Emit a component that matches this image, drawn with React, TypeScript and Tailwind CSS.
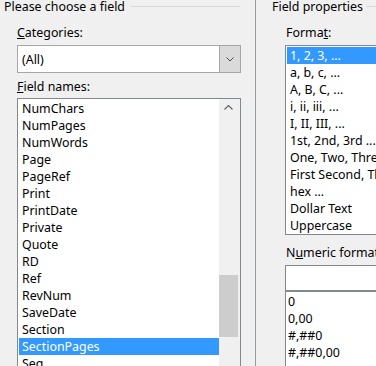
const fieldNames = [
  "NumChars",
  "NumPages",
  "NumWords",
  "Page",
  "PageRef",
  "Print",
  "PrintDate",
  "Private",
  "Quote",
  "RD",
  "Ref",
  "RevNum",
  "SaveDate",
  "Section",
  "SectionPages",
  "Seq",
];

const formats = [
  "1, 2, 3, ...",
  "a, b, c, ...",
  "A, B, C, ...",
  "i, ii, iii, ...",
  "I, II, III, ...",
  "1st, 2nd, 3rd ...",
  "One, Two, Three ...",
  "First Second, Third ...",
  "hex ...",
  "Dollar Text",
  "Uppercase",
];

const numericFormats = ["0", "0,00", "#,##0", "#,##0,00"];

function GroupTitle({ title, pad, gap }: { title: string; pad: string; gap: string }) {
  return (
    <div className={`flex h-[13px] shrink-0 items-center ${pad}`}>
      <span className="whitespace-nowrap leading-[13px]">{title}</span>
      <div className={`h-px flex-1 bg-[#d9d9d9] ${gap}`} />
    </div>
  );
}

function ListRow({ text, selected }: { text: string; selected?: boolean }) {
  return (
    <div
      className={`h-[17px] whitespace-nowrap pl-[3px] leading-[17px] ${
        selected ? "bg-[#3399ff] text-white" : ""
      }`}
    >
      {text}
    </div>
  );
}

export default function App() {
  return (
    <div className="flex h-[366px] w-[376px] overflow-hidden bg-[#f0f0f0] font-['Noto_Sans',sans-serif] text-[12.4px] text-black">
      {/* left group */}
      <div className="flex w-[255px] shrink-0 flex-col">
        <GroupTitle title="Please choose a field" pad="pl-[4px] pr-[15px]" gap="ml-[6px]" />

        <div className="ml-[17px] mt-[12px] shrink-0 leading-[16px]">
          <span className="underline">C</span>ategories:
        </div>
        <div className="ml-[17px] mt-[4px] flex h-[28px] w-[224px] shrink-0 border border-[#a6a6a6] bg-white">
          <span className="flex-1 pl-[4px] pt-[1px] leading-[26px]">(All)</span>
          <div className="flex w-[21px] items-center justify-center border-l border-[#a6a6a6] bg-[#dadada]">
            <svg width="8" height="5" viewBox="0 0 8 5" fill="none">
              <path d="M0.5 0.5 L4 4 L7.5 0.5" stroke="#505050" strokeWidth="1" />
            </svg>
          </div>
        </div>

        <div className="ml-[17px] mt-[6px] shrink-0 leading-[16px]">
          <span className="underline">F</span>ield names:
        </div>
        <div className="ml-[17px] mt-[3px] flex h-[300px] w-[224px] shrink-0 border border-[#828790] bg-white">
          <div className="w-[201px] pl-[1px] pt-[1px]">
            {fieldNames.map((n) => (
              <ListRow key={n} text={n} selected={n === "SectionPages"} />
            ))}
          </div>
          <div className="flex w-[21px] flex-col bg-[#f0f0f0]">
            <div className="flex h-[17px] items-center justify-center pr-[2px]">
              <svg width="9" height="5" viewBox="0 0 9 5" fill="none">
                <path d="M0.5 4.5 L4.5 0.5 L8.5 4.5" stroke="#606060" strokeWidth="1.1" />
              </svg>
            </div>
            <div className="mt-[159px] h-[62px] w-[19px] bg-[#cdcdcd]" />
          </div>
        </div>
      </div>

      {/* separator */}
      <div className="w-px shrink-0 bg-[#9a9a9a]" />

      {/* right group */}
      <div className="flex min-w-0 flex-1 flex-col">
        <GroupTitle title="Field properties" pad="pl-[16px]" gap="ml-[3px]" />

        <div className="ml-[30px] mt-[12px] shrink-0 whitespace-nowrap leading-[16px]">
          Forma<span className="underline">t</span>:
        </div>
        <div className="ml-[29px] mt-[4px] h-[190px] w-[200px] shrink-0 border border-[#828790] bg-white pl-[1px] pt-[1px]">
          {formats.map((f, i) => (
            <ListRow key={f} text={f} selected={i === 0} />
          ))}
        </div>

        <div className="ml-[30px] mt-[10px] shrink-0 whitespace-nowrap leading-[16px]">
          N<span className="underline">u</span>meric format:
        </div>
        <div className="ml-[29px] mt-[4px] h-[26px] w-[200px] shrink-0 border border-[#828790] bg-white" />
        <div className="ml-[29px] h-[100px] w-[200px] shrink-0 border border-[#828790] bg-white pl-[2px] pt-[1px]">
          {numericFormats.map((f) => (
            <div key={f} className="h-[17px] whitespace-nowrap leading-[17px]">
              {f}
            </div>
          ))}
        </div>
      </div>
    </div>
  );
}
